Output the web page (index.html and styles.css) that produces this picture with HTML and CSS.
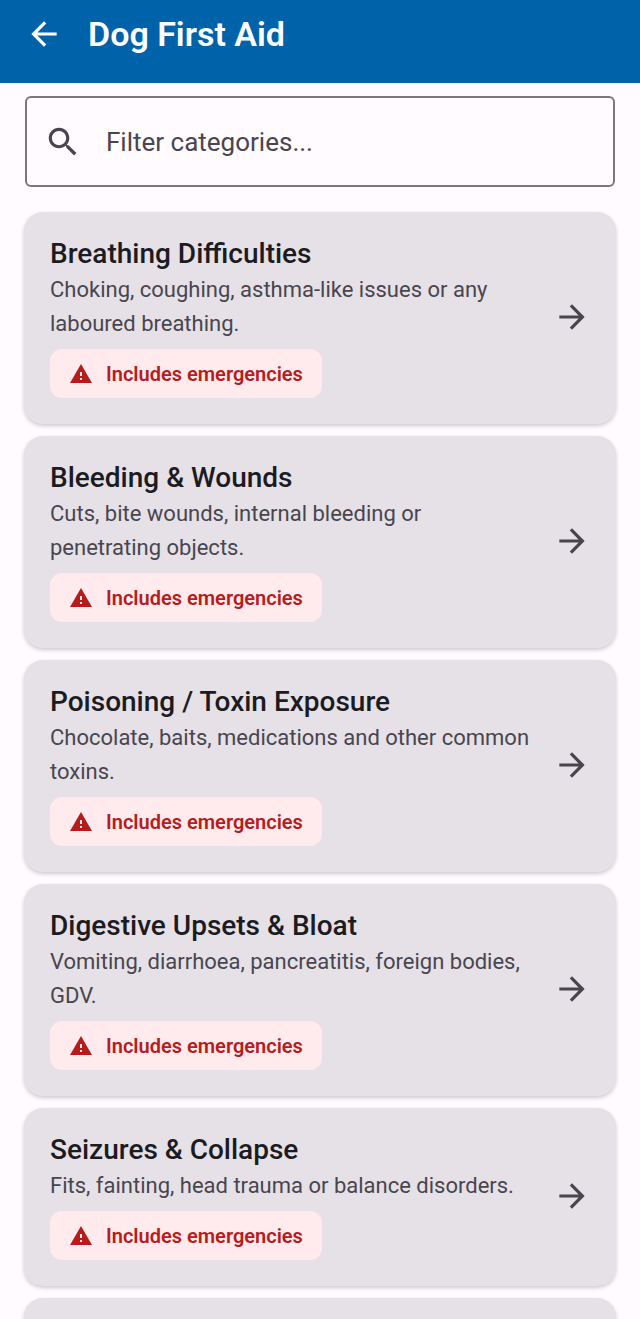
FILE: index.html
```html
<!DOCTYPE html>
<html lang="en">
<head>
  <meta charset="UTF-8">
  <meta name="viewport" content="width=device-width, initial-scale=1">
  <title>Dog First Aid</title>
  <link rel="stylesheet" href="styles.css">
</head>
<body>

  <!-- shared icons -->
  <svg class="sprite" aria-hidden="true">
    <symbol id="arrow" viewBox="0 0 24 24">
      <path d="M12 4l-1.41 1.41L16.17 11H4v2h12.17l-5.58 5.59L12 20l8-8z"/>
    </symbol>
    <symbol id="warning" viewBox="0 0 24 24">
      <path d="M1 21h22L12 2 1 21zm12-3h-2v-2h2v2zm0-4h-2v-4h2v4z"/>
    </symbol>
  </svg>

  <header class="topbar">
    <button class="back" type="button" aria-label="Back">
      <svg class="icon" viewBox="0 0 24 24">
        <path d="M20 11H7.83l5.59-5.59L12 4l-8 8 8 8 1.41-1.41L7.83 13H20v-2z"/>
      </svg>
    </button>
    <h1>Dog First Aid</h1>
  </header>

  <main class="content">
    <label class="search" for="filter">
      <svg class="icon" viewBox="0 0 24 24" aria-hidden="true">
        <path d="M15.5 14h-.79l-.28-.27C15.41 12.59 16 11.11 16 9.5 16 5.91 13.09 3 9.5 3S3 5.91 3 9.5 5.91 16 9.5 16c1.61 0 3.09-.59 4.23-1.57l.27.28v.79l5 4.99L20.49 19l-4.99-5zm-6 0C7.01 14 5 11.99 5 9.5S7.01 5 9.5 5 14 7.01 14 9.5 11.99 14 9.5 14z"/>
      </svg>
      <input id="filter" type="text" placeholder="Filter categories..." aria-label="Filter categories">
    </label>

    <div class="list">
      <a class="card" href="#breathing">
        <div class="info">
          <h2>Breathing Difficulties</h2>
          <p>Choking, coughing, asthma-like issues or any laboured breathing.</p>
          <span class="chip"><svg><use href="#warning"/></svg>Includes emergencies</span>
        </div>
        <svg class="icon"><use href="#arrow"/></svg>
      </a>
      <a class="card" href="#bleeding">
        <div class="info">
          <h2>Bleeding &amp; Wounds</h2>
          <p>Cuts, bite wounds, internal bleeding or penetrating objects.</p>
          <span class="chip"><svg><use href="#warning"/></svg>Includes emergencies</span>
        </div>
        <svg class="icon"><use href="#arrow"/></svg>
      </a>
      <a class="card" href="#poisoning">
        <div class="info">
          <h2>Poisoning / Toxin Exposure</h2>
          <p>Chocolate, baits, medications and other common toxins.</p>
          <span class="chip"><svg><use href="#warning"/></svg>Includes emergencies</span>
        </div>
        <svg class="icon"><use href="#arrow"/></svg>
      </a>
      <a class="card" href="#digestive">
        <div class="info">
          <h2>Digestive Upsets &amp; Bloat</h2>
          <p>Vomiting, diarrhoea, pancreatitis, foreign bodies, GDV.</p>
          <span class="chip"><svg><use href="#warning"/></svg>Includes emergencies</span>
        </div>
        <svg class="icon"><use href="#arrow"/></svg>
      </a>
      <a class="card" href="#seizures">
        <div class="info">
          <h2>Seizures &amp; Collapse</h2>
          <p>Fits, fainting, head trauma or balance disorders.</p>
          <span class="chip"><svg><use href="#warning"/></svg>Includes emergencies</span>
        </div>
        <svg class="icon"><use href="#arrow"/></svg>
      </a>
      <div class="card"></div>
    </div>
  </main>

</body>
</html>
```
FILE: styles.css
```css
* {
  box-sizing: border-box;
}

body {
  margin: 0;
  height: 100vh;
  display: flex;
  flex-direction: column;
  overflow: hidden;
  background: #fffbff;
  color: #1c1b1f;
  font-family: Roboto, "Liberation Sans", sans-serif;
}

h1,
h2,
p {
  margin: 0;
}

.sprite {
  display: none;
}

.icon {
  flex: none;
  width: 38px;
  height: 38px;
  fill: #49454f;
}

/* top bar */
.topbar {
  flex: none;
  display: flex;
  align-items: center;
  gap: 25px;
  padding: 14px 25px 29px;
  background: #0063aa;
  color: #fff;
}

.topbar h1 {
  font-size: 34px;
  font-weight: 600;
  line-height: 40px;
}

.back {
  display: flex;
  padding: 0;
  border: none;
  background: none;
  cursor: pointer;
}

.back .icon {
  fill: #fff;
}

.content {
  flex: 1;
  min-height: 0;
  padding: 13px 24px 0;
}

/* filter box */
.search {
  display: flex;
  align-items: center;
  gap: 24px;
  height: 91px;
  margin: 0 1px 25px;
  padding: 0 17px;
  border: 2px solid #7c767e;
  border-radius: 6px;
}

.search input {
  flex: 1;
  min-width: 0;
  padding: 0;
  border: none;
  outline: none;
  background: none;
  color: #1c1b1f;
  font-family: inherit;
  font-size: 26px;
}

.search input::placeholder {
  color: #49454f;
  opacity: 1;
}

/* category cards */
.list {
  display: flex;
  flex-direction: column;
  gap: 12px;
}

.card {
  display: flex;
  align-items: center;
  gap: 16px;
  padding: 24px 25px 26px 26px;
  border-radius: 19px;
  background: #e5e1e7;
  box-shadow: 0 2px 4px rgba(0, 0, 0, 0.2);
  color: inherit;
  text-decoration: none;
}

.info {
  flex: 1;
}

.card h2 {
  font-size: 28px;
  font-weight: 500;
  line-height: 36px;
}

.card p {
  margin-top: 1px;
  color: #49454f;
  font-size: 22px;
  line-height: 34px;
}

.chip {
  display: flex;
  align-items: center;
  gap: 13px;
  width: fit-content;
  height: 49px;
  margin-top: 8px;
  padding: 0 19px;
  border-radius: 12px;
  background: #ffebee;
  color: #b71c1c;
  font-size: 20px;
  font-weight: 600;
}

.chip svg {
  width: 24px;
  height: 24px;
  fill: #b71c1c;
}
```
